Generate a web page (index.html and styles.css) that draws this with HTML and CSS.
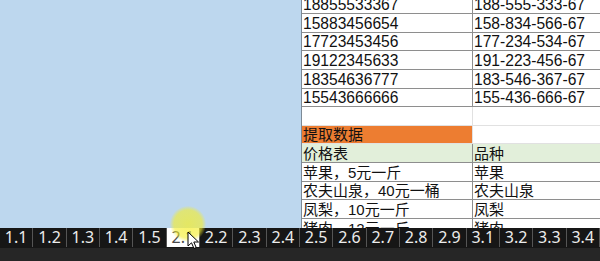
FILE: index.html
```html
<!DOCTYPE html>
<html>
  <head>
    <meta charset="utf-8">
    <title>提取数据</title>
    <link rel="stylesheet" href="styles.css">
  </head>
  <body>
    <main class="screen">
      <div class="workspace">
        <div class="pane"></div>
        <section class="sheet">
          <div class="row boxed"><div class="cell">18855533367</div><div class="cell">188-555-333-67</div></div>
          <div class="row boxed"><div class="cell">15883456654</div><div class="cell">158-834-566-67</div></div>
          <div class="row boxed"><div class="cell">17723453456</div><div class="cell">177-234-534-67</div></div>
          <div class="row boxed"><div class="cell">19122345633</div><div class="cell">191-223-456-67</div></div>
          <div class="row boxed"><div class="cell">18354636777</div><div class="cell">183-546-367-67</div></div>
          <div class="row boxed"><div class="cell">15543666666</div><div class="cell">155-436-666-67</div></div>
          <div class="row plain"><div class="cell"></div><div class="cell"></div></div>
          <div class="row plain"><div class="cell zh title">提取数据</div><div class="cell"></div></div>
          <div class="row boxed head"><div class="cell zh">价格表</div><div class="cell zh">品种</div></div>
          <div class="row boxed"><div class="cell zh">苹果，5元一斤</div><div class="cell zh">苹果</div></div>
          <div class="row boxed"><div class="cell zh">农夫山泉，40元一桶</div><div class="cell zh">农夫山泉</div></div>
          <div class="row boxed"><div class="cell zh">凤梨，10元一斤</div><div class="cell zh">凤梨</div></div>
          <div class="row boxed"><div class="cell zh">猪肉，12元一斤</div><div class="cell zh">猪肉</div></div>
        </section>
      </div>
      <nav class="tabs">
        <span class="tab">1.1</span>
        <span class="tab">1.2</span>
        <span class="tab">1.3</span>
        <span class="tab">1.4</span>
        <span class="tab">1.5</span>
        <span class="tab active">2.1</span>
        <span class="tab">2.2</span>
        <span class="tab">2.3</span>
        <span class="tab">2.4</span>
        <span class="tab">2.5</span>
        <span class="tab">2.6</span>
        <span class="tab">2.7</span>
        <span class="tab">2.8</span>
        <span class="tab">2.9</span>
        <span class="tab">3.1</span>
        <span class="tab">3.2</span>
        <span class="tab">3.3</span>
        <span class="tab">3.4</span>
      </nav>
      <div class="spot"></div>
      <svg class="cursor" width="14" height="20" viewBox="0 0 14 20">
        <path d="M1 1 L1 15 L4.5 11.8 L7 17.5 L9.2 16.5 L6.8 11 L11.5 11 Z" fill="#fff" stroke="#000" stroke-width="1" stroke-linejoin="round"/>
      </svg>
    </main>
  </body>
</html>
```

FILE: styles.css
```css
body {
  margin:   0;
  overflow: hidden;
}
.screen {
  display:        flex;
  flex-direction: column;
  height:         261px;
  position:       relative;
  width:          600px;
}
.workspace {
  display: flex;
  height:  228px;
}
.pane {
  background:   #bdd7ee;
  border-right: 1px solid #7d8a96;
  width:        301px;
}
.sheet {
  background:  #fff;
  color:       #111;
  flex:        1;
  font-family: "Liberation Sans", "Noto Sans CJK SC", sans-serif;
  font-size:   15.6px;
  overflow:    hidden;
}
.row {
  box-sizing:            border-box;
  display:               grid;
  grid-template-columns: 171px 1fr;
  height:                18.64px;
}
.row:first-child {
  margin-top: -4.64px;
}
.cell {
  align-items:  flex-end;
  box-sizing:   border-box;
  display:      flex;
  line-height:  16px;
  overflow:     hidden;
  padding-left: 1px;
  white-space:  nowrap;
}
.boxed {
  border-bottom: 1px solid #8e8e8e;
}
.boxed .cell:first-child {
  border-right: 1px solid #8e8e8e;
}
.plain {
  border-bottom: 1px solid #e1e1e1;
}
.plain .cell:first-child {
  border-right: 1px solid #e1e1e1;
}
.zh {
  font-size: 15px;
}
.title {
  background: #ed7d31;
}
.head {
  background: #e2efda;
}
.tabs {
  background:  linear-gradient(#161616 0, #161616 20px, #262626 20px);
  display:     flex;
  flex:        1;
  font-family: "Noto Sans", sans-serif;
  font-size:   16px;
  line-height: 19px;
}
.tab {
  align-items:     center;
  border-right:    1px solid #555;
  box-sizing:      border-box;
  color:           #ececec;
  display:         flex;
  flex:            1;
  height:          19px;
  justify-content: center;
}
.tab.active {
  background: #fff;
  color:      #4a4a4a;
}
.spot {
  background:    radial-gradient(circle, rgba(245, 238, 40, 0.7) 0, rgba(245, 238, 40, 0.6) 55%, rgba(245, 238, 40, 0) 72%);
  border-radius: 50%;
  height:        36px;
  left:          170px;
  position:      absolute;
  top:           206px;
  width:         36px;
}
.cursor {
  left:     187px;
  position: absolute;
  top:      231px;
}
```
